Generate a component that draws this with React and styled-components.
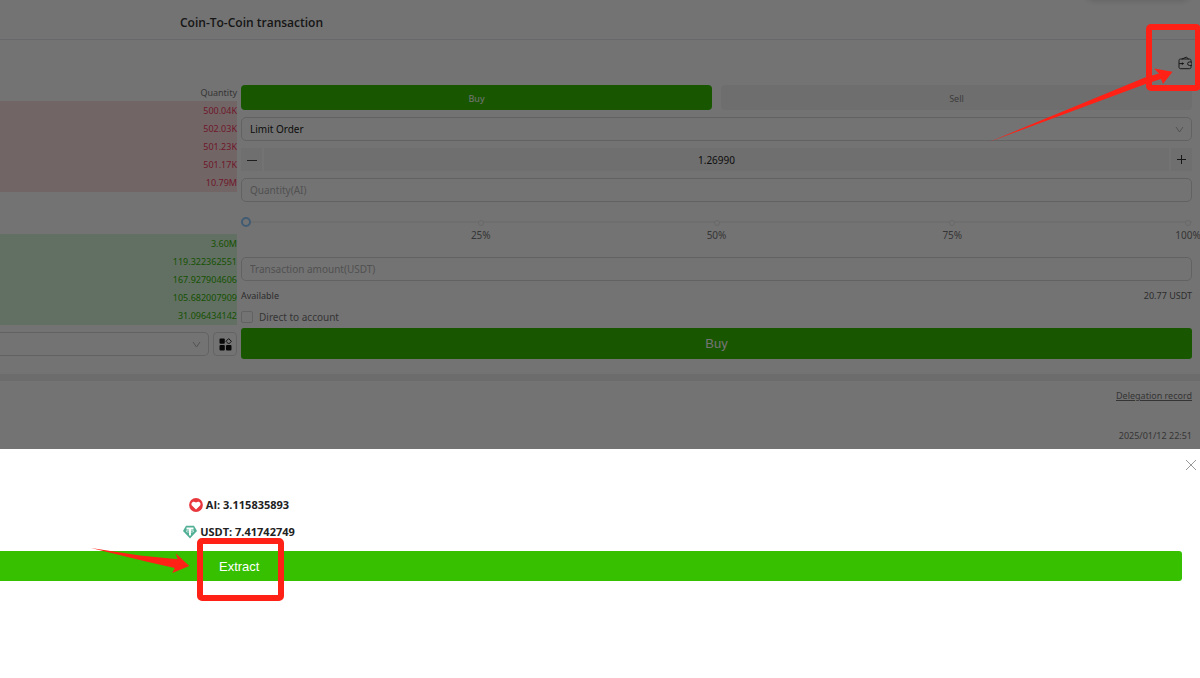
import React, { useState } from "react";
import styled, { createGlobalStyle } from "styled-components";

const GlobalStyle = createGlobalStyle`
  * {
    box-sizing: border-box;
  }
  body {
    margin: 0;
    overflow: hidden;
    background: #fff;
    color: #222;
    font-family: "Noto Sans", "Open Sans", sans-serif;
    font-size: 10px;
    line-height: 14px;
  }
  button, input, select {
    margin: 0;
    font-family: inherit;
    color: inherit;
  }
`;

const Page = styled.div`
  position: relative;
  min-height: 100vh;
  overflow: hidden;
`;

const Header = styled.header`
  display: flex;
  align-items: center;
  height: 40px;
  padding: 6px 0 0 180px;
  border-bottom: 1px solid #e6e6ea;
`;

const Title = styled.h1`
  margin: 0;
  font-family: "Open Sans", "Noto Sans", sans-serif;
  font-size: 12px;
  font-weight: 600;
  color: #333;
`;

const FloatingCard = styled.div`
  position: absolute;
  top: -20px;
  right: 10px;
  width: 104px;
  height: 20px;
  border-radius: 8px;
  box-shadow: 0 1px 6px rgba(0, 0, 0, .15);
`;

const Toolbar = styled.div`
  display: flex;
  justify-content: flex-end;
  align-items: center;
  height: 45px;
  padding-right: 8px;
`;

const IconButton = styled.button`
  display: flex;
  padding: 0;
  border: 0;
  background: none;
  cursor: pointer;
`;

const Trade = styled.main`
  display: grid;
  grid-template-columns: 237px 1fr;
  column-gap: 4px;
  padding: 0 8px 15px 0;
  border-bottom: 7px solid #f0f0f0;
`;

const Book = styled.section`
  display: flex;
  flex-direction: column;
  font-size: 9px;
`;

const BookHead = styled.div`
  height: 16px;
  line-height: 16px;
  text-align: right;
  color: #777;
`;

const Orders = styled.ul`
  margin: 0 0 ${props => props.$sell ? "42px" : "7px"};
  padding: 1px 0 0;
  list-style: none;
  text-align: right;
  background: ${props => props.$sell ? "#fce1e1" : "#d9f8dd"};
  color: ${props => props.$sell ? "#f5385f" : "#33b400"};
  li {
    line-height: 18px;
  }
`;

const BookFooter = styled.div`
  display: grid;
  grid-template-columns: 1fr 24px;
  gap: 4px;
`;

const SquareButton = styled.button`
  display: flex;
  align-items: center;
  justify-content: center;
  height: 24px;
  padding: 0;
  border: 1px solid #dedede;
  border-radius: 4px;
  background: none;
`;

const SelectWrap = styled.div`
  display: grid;
  align-items: center;
  > * {
    grid-area: 1 / 1;
  }
  svg {
    justify-self: end;
    margin-right: 8px;
    pointer-events: none;
  }
`;

const Select = styled.select`
  appearance: none;
  width: 100%;
  height: 24px;
  padding: 0 8px;
  border: 1px solid #d9d9d9;
  border-left-width: ${props => props.$open ? "0" : "1px"};
  border-radius: ${props => props.$open ? "0 5px 5px 0" : "5px"};
  background: none;
  font-size: 10px;
`;

const Form = styled.form`
  display: flex;
  flex-direction: column;
  gap: 7px;
`;

const Sides = styled.div`
  display: grid;
  grid-template-columns: 1fr 1fr;
  gap: 9px;
`;

const SideButton = styled.button`
  height: 25px;
  padding: 1px 0 0;
  border: 0;
  border-radius: 4px;
  font-size: 9px;
  background: ${props => props.$active ? "#36c000" : "#f4f4f4"};
  color: ${props => props.$active ? "#fff" : "#888"};
`;

const Stepper = styled.div`
  display: grid;
  grid-template-columns: 21px 1fr 21px;
  gap: 2px;
  button {
    display: flex;
    align-items: center;
    justify-content: center;
    padding: 0;
    border: 0;
    background: #f6f6f6;
  }
  input {
    min-width: 0;
    height: 23px;
    padding: 0;
    border: 0;
    background: #f6f6f6;
    font-size: 10px;
    text-align: center;
  }
`;

const Field = styled.input`
  width: 100%;
  height: 24px;
  padding: 0 8px;
  border: 1px solid #d9d9d9;
  border-radius: 5px;
  background: none;
  font-size: 10px;
  &::placeholder {
    color: #b4b4b4;
    opacity: 1;
  }
`;

const SliderBox = styled.div`
  height: 41px;
  padding-top: 8px;
`;

const Range = styled.input`
  appearance: none;
  display: block;
  width: 100%;
  height: 10px;
  margin: 0;
  background: linear-gradient(#f3f3f3, #f3f3f3) center / 100% 2px no-repeat;
  &::-webkit-slider-thumb {
    appearance: none;
    width: 10px;
    height: 10px;
    border: 2px solid #91caff;
    border-radius: 50%;
    background: #fff;
  }
`;

const Marks = styled.div`
  display: flex;
  justify-content: space-between;
  margin: -7px 4px 0;
  color: #777;
`;

const Mark = styled.span`
  display: flex;
  flex-direction: column;
  align-items: center;
  gap: 2px;
  width: 0;
  &::before {
    content: "";
    width: 4px;
    height: 4px;
    border: 1px solid #e8e8e8;
    border-radius: 50%;
    background: #fff;
    visibility: ${props => props.$hidden ? "hidden" : "visible"};
  }
`;

const Balance = styled.div`
  display: flex;
  justify-content: space-between;
  line-height: 16px;
  font-size: 9px;
  color: #666;
`;

const Check = styled.label`
  display: flex;
  align-items: center;
  gap: 6px;
  margin: -1px 0 -3px;
  color: #777;
  input {
    appearance: none;
    width: 12px;
    height: 12px;
    border: 1px solid #d9d9d9;
    border-radius: 2px;
  }
`;

const ActionButton = styled.button`
  height: ${props => props.$tall ? "31px" : "30px"};
  width: 100%;
  border: 0;
  border-radius: 3px;
  background: #36c000;
  color: #fff;
  font-family: "Liberation Sans", Arial, sans-serif;
  font-size: 13px;
`;

const Records = styled.section`
  display: flex;
  flex-direction: column;
  align-items: flex-end;
  gap: 26px;
  padding: 8px 8px 0;
  font-size: 9px;
  color: #777;
  a {
    color: inherit;
  }
`;

const Mask = styled.div`
  position: absolute;
  inset: 0;
  background: rgba(0, 0, 0, .55);
`;

const Drawer = styled.aside`
  position: absolute;
  left: 0;
  right: 0;
  bottom: 0;
  min-height: 229px;
  background: #fff;
`;

const DrawerHead = styled.div`
  display: flex;
  justify-content: flex-end;
  padding: 11px 4px 0;
`;

const Assets = styled.div`
  display: flex;
  flex-direction: column;
  align-items: center;
  gap: 13px;
  width: 478px;
  padding: 28px 0 12px;
  font-family: "Open Sans", "Noto Sans", sans-serif;
  font-size: 11px;
  font-weight: 700;
`;

const Asset = styled.div`
  display: flex;
  align-items: center;
  gap: 3px;
`;

const ExtractBar = styled.div`
  padding-right: 18px;
  button {
    display: block;
    padding: 0 0 0 219px;
    border-radius: 0 3px 3px 0;
    text-align: left;
  }
`;

const Highlight = styled.div`
  position: absolute;
  border: 6px solid #ff2116;
  border-radius: 5px;
  pointer-events: none;
`;

const WalletHighlight = styled(Highlight)`
  top: 24px;
  right: -1px;
  width: 55px;
  height: 67px;
`;

const ExtractHighlight = styled(Highlight)`
  top: 89px;
  left: 197px;
  width: 87px;
  height: 63px;
`;

const Arrow = styled.svg`
  position: absolute;
  fill: #ff2116;
  pointer-events: none;
`;

const WalletArrow = styled(Arrow)`
  top: 68px;
  right: 26px;
`;

const ExtractArrow = styled(Arrow)`
  top: 97px;
  left: 90px;
`;

const asks = ["500.04K", "502.03K", "501.23K", "501.17K", "10.79M"];
const bids = ["3.60M", "119.322362551", "167.927904606", "105.682007909", "31.096434142"];

function Chevron() {
  return (
    <svg width="9" height="9" viewBox="0 0 9 9" fill="none" stroke="#b5b5b5">
      <path d="M1 2l3.5 5L8 2" />
    </svg>
  );
}

function WalletIcon() {
  return (
    <svg width="14" height="14" viewBox="0 0 14 14" fill="none" stroke="#222" strokeWidth=".9" strokeLinecap="round" strokeLinejoin="round">
      <path d="M4 3L8.500 1l1.700 2" />
      <path d="M13 5.400V4.500c0-.9-.5-1.500-1.400-1.500H2.400C1.500 3 1 3.600 1 4.500v6.700c0 .9.5 1.500 1.400 1.500h9.200c.9 0 1.400-.6 1.400-1.500V9.600" />
      <path d="M13.500 6h-2.200a1.700 1.700 0 000 3.400h2.200zM1.500 7.600h2.500" />
      <circle cx="4.400" cy="7.600" r=".7" fill="#222" />
    </svg>
  );
}

function AppsIcon() {
  return (
    <svg width="13" height="13" viewBox="0 0 13 13" fill="#111">
      <rect x="0.500" y="0.500" width="5.300" height="5.300" rx="1" />
      <rect x="0.500" y="7" width="5.300" height="5.500" rx="1" />
      <rect x="7" y="7" width="5.500" height="5.500" rx="1" />
      <path d="M9.700.6l2.700 2.700-2.700 2.700-2.700-2.700z" fill="none" stroke="#222" strokeLinejoin="round" />
    </svg>
  );
}

function HeartCoin() {
  return (
    <svg width="14" height="14" viewBox="0 0 14 14">
      <circle cx="7" cy="7" r="6.900" fill="#e8383d" />
      <path d="M7 11.600L3.200 7.800C1.100 5.500 4 1.900 7 4.600c3-2.700 5.900.9 3.800 3.200z" fill="#fff" />
    </svg>
  );
}

function TetherCoin() {
  return (
    <svg width="14" height="14" viewBox="0 0 14 14">
      <path d="M3 .7h8L14 6l-7 7.500L0 6z" fill="#50af95" />
      <path d="M3.500 2.600h7v1.800H8v6.200H6V4.400H3.500z" fill="#fff" />
      <ellipse cx="7" cy="6.200" rx="4" ry="1" fill="none" stroke="#fff" strokeWidth=".6" />
    </svg>
  );
}

function OrderBook() {
  return (
    <Book>
      <BookHead>Quantity</BookHead>
      <Orders $sell>{asks.map(v => <li key={v}>{v}</li>)}</Orders>
      <Orders>{bids.map(v => <li key={v}>{v}</li>)}</Orders>
      <BookFooter>
        <SelectWrap>
          <Select $open aria-label="Depth"><option></option></Select>
          <Chevron />
        </SelectWrap>
        <SquareButton aria-label="Layout"><AppsIcon /></SquareButton>
      </BookFooter>
    </Book>
  );
}

function OrderForm() {
  const [price, setPrice] = useState("1.26990");
  const step = d => setPrice((Number(price) + d).toFixed(5));
  return (
    <Form onSubmit={e => e.preventDefault()}>
      <Sides>
        <SideButton type="button" $active>Buy</SideButton>
        <SideButton type="button">Sell</SideButton>
      </Sides>
      <SelectWrap>
        <Select aria-label="Order type"><option>Limit Order</option></Select>
        <Chevron />
      </SelectWrap>
      <Stepper>
        <button type="button" aria-label="Decrease" onClick={() => step(-0.0001)}>
          <svg width="10" height="10" stroke="#444"><path d="M0 5.500h10" /></svg>
        </button>
        <input aria-label="Price" value={price} onChange={e => setPrice(e.target.value)} />
        <button type="button" aria-label="Increase" onClick={() => step(0.0001)}>
          <svg width="9" height="9" stroke="#333"><path d="M0 4.500h9M4.500 0v9" /></svg>
        </button>
      </Stepper>
      <Field aria-label="Quantity" placeholder="Quantity(AI)" />
      <SliderBox>
        <Range type="range" defaultValue="0" aria-label="Percent" />
        <Marks>
          <Mark $hidden />
          {[25, 50, 75, 100].map(n => <Mark key={n}>{n}%</Mark>)}
        </Marks>
      </SliderBox>
      <Field aria-label="Transaction amount" placeholder="Transaction amount(USDT)" />
      <Balance><span>Available</span><span>20.77 USDT</span></Balance>
      <Check><input type="checkbox" />Direct to account</Check>
      <ActionButton $tall>Buy</ActionButton>
    </Form>
  );
}

function TransferDrawer() {
  return (
    <Drawer>
      <DrawerHead>
        <IconButton aria-label="Close">
          <svg width="10" height="10" stroke="#999"><path d="M0 0l10 10M10 0L0 10" /></svg>
        </IconButton>
      </DrawerHead>
      <Assets>
        <Asset><HeartCoin />AI: 3.115835893</Asset>
        <Asset><TetherCoin />USDT: 7.41742749</Asset>
      </Assets>
      <ExtractBar><ActionButton>Extract</ActionButton></ExtractBar>
      <ExtractArrow width="100" height="28" viewBox="0 0 100 28">
        <path d="M1 2l49 7.500 37.700 3.800-2-6L99.300 20l-17 7 2.400-5L57 15.700z" />
      </ExtractArrow>
      <ExtractHighlight />
    </Drawer>
  );
}

function App() {
  return (
    <Page>
      <GlobalStyle />
      <Header><Title>Coin-To-Coin transaction</Title></Header>
      <FloatingCard />
      <Toolbar><IconButton aria-label="Wallet"><WalletIcon /></IconButton></Toolbar>
      <Trade>
        <OrderBook />
        <OrderForm />
      </Trade>
      <Records>
        <a href="#records">Delegation record</a>
        <time>2025/01/12 22:51</time>
      </Records>
      <Mask />
      <TransferDrawer />
      <WalletArrow width="186" height="76" viewBox="-4 0 186 76">
        <path d="M-3 74L153 9.500l14-4-5-5 18.500 3.200L171 16l-2-5-14 4.500z" />
      </WalletArrow>
      <WalletHighlight />
    </Page>
  );
}

export default App;
